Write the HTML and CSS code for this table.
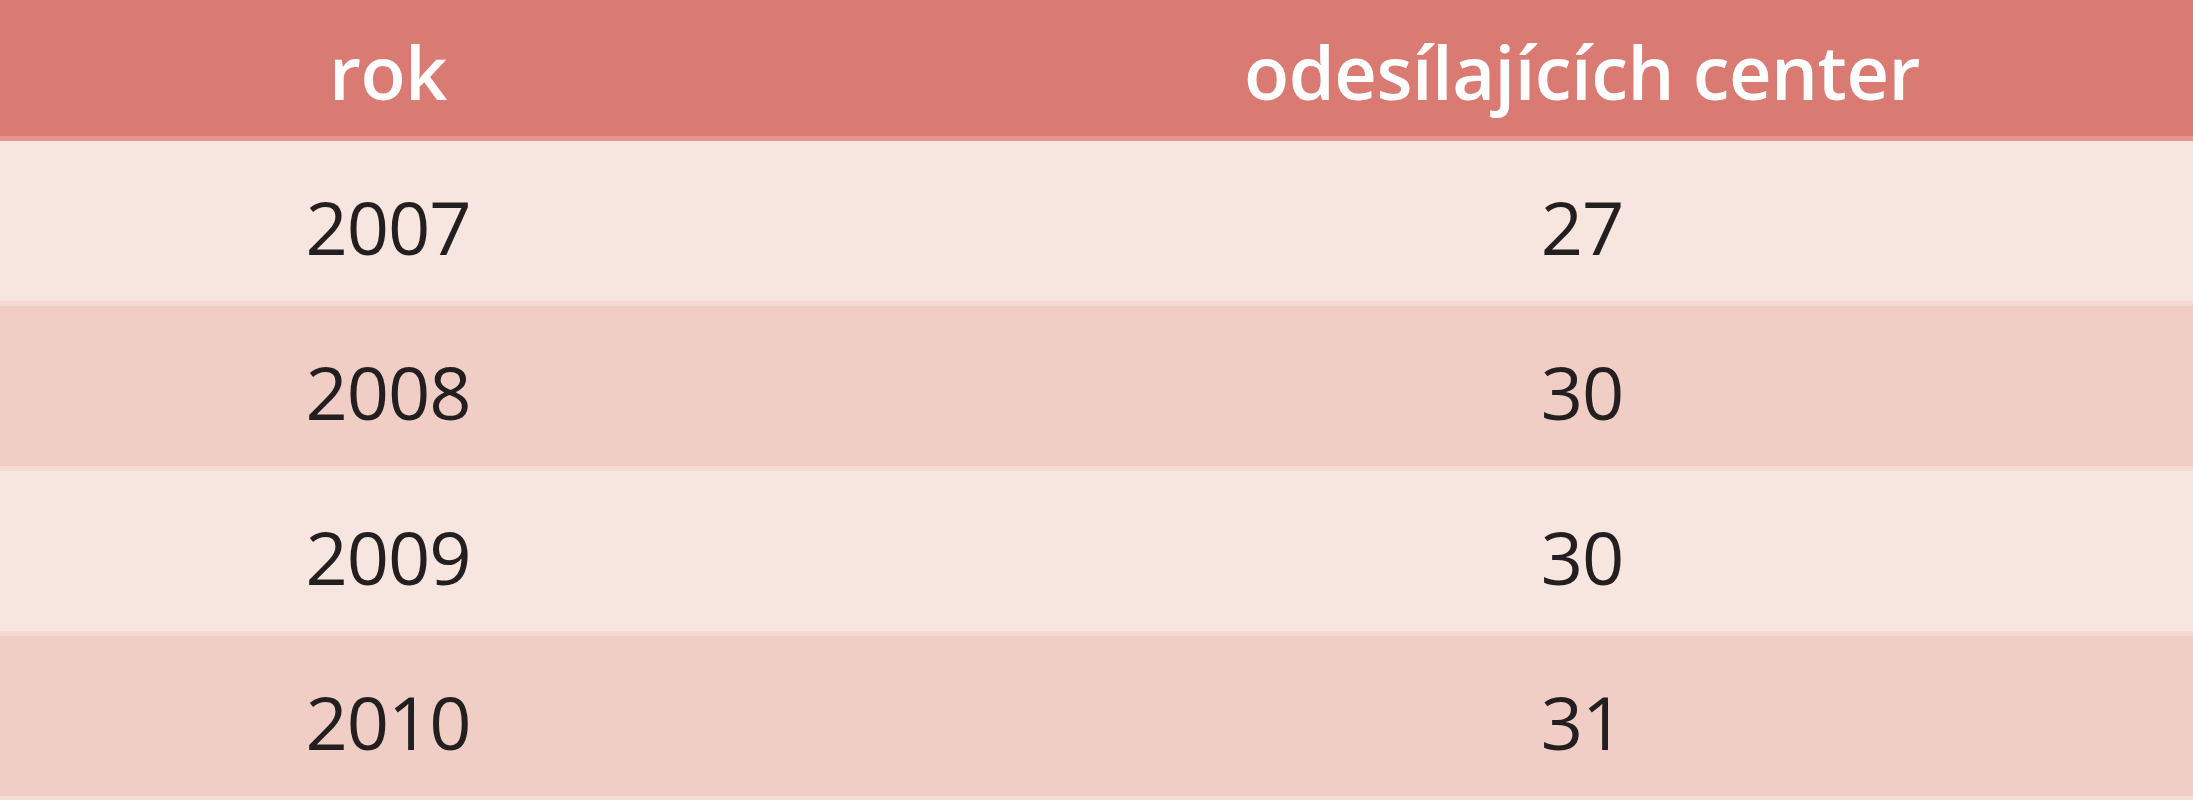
FILE: index.html
```html
<!DOCTYPE html>
<html lang="cs">
<head>
<meta charset="utf-8">
<title>Tabulka</title>
<link rel="stylesheet" href="styles.css">
</head>
<body>
<div class="table">
  <div class="row head">
    <div class="cell c1">rok</div>
    <div class="cell c2">odesílajících center</div>
  </div>
  <div class="row light">
    <div class="cell c1">2007</div>
    <div class="cell c2">27</div>
  </div>
  <div class="row dark">
    <div class="cell c1">2008</div>
    <div class="cell c2">30</div>
  </div>
  <div class="row light">
    <div class="cell c1">2009</div>
    <div class="cell c2">30</div>
  </div>
  <div class="row dark">
    <div class="cell c1">2010</div>
    <div class="cell c2">31</div>
  </div>
  <div class="row light tail"></div>
</div>
</body>
</html>
```

FILE: styles.css
```css
html, body {
  margin: 0;
  padding: 0;
  background: #f7e5df;
  overflow: hidden;
}

.table {
  display: flex;
  flex-direction: column;
  width: 2193px;
  font-family: "Open Sans", "Noto Sans", sans-serif;
}

.row {
  display: grid;
  grid-template-columns: 776px 1fr;
  box-sizing: border-box;
}

.cell {
  text-align: center;
  white-space: nowrap;
}

.c2 {
  padding-left: 195px;
}

.head {
  height: 141px;
  background: #da7b73;
  border-bottom: 5px solid #e6958e;
  color: #ffffff;
  font-weight: 600;
  font-size: 74px;
  line-height: 128px;
  padding-top: 8px;
  letter-spacing: -0.5px;
}

.light,
.dark {
  height: 165px;
  font-size: 74px;
  line-height: 150px;
  padding-top: 11px;
  color: #231f20;
  letter-spacing: -1px;
}

.light {
  background: #f7e5df;
  border-bottom: 5px solid #f3dad3;
}

.dark {
  background: #f0cdc5;
  border-bottom: 5px solid #f4dbd5;
}

.tail {
  height: 20px;
  border: 0;
}
```
